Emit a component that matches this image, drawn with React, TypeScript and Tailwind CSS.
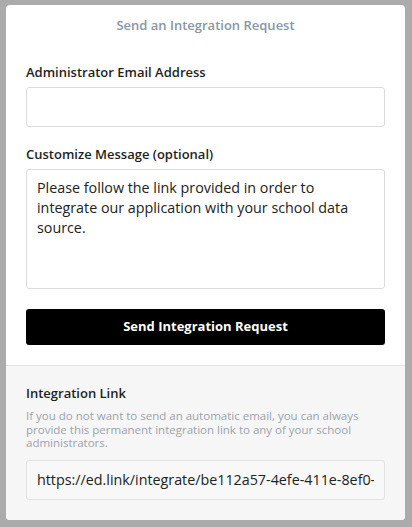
import React from 'react';

const font = { fontFamily: '"Open Sans", "Noto Sans", Arial, sans-serif' };

export default function App() {
  return (
    <div className="min-h-[527px] w-[412px] bg-[#ababab] pt-[5px] px-[6px] pb-[7px]" style={font}>
      <div className="w-[399px] h-[515px] bg-white rounded-[4px] overflow-hidden flex flex-col">
        {/* Request form */}
        <section className="px-5 pb-5">
          <h1 className="text-center text-[13px] leading-5 font-semibold text-[#8a96a3] pt-[10px] pb-[27px]">
            Send an Integration Request
          </h1>

          <label className="block text-[13px] font-semibold text-[#1f1f1f] leading-5 mb-[5px]">
            Administrator Email Address
          </label>
          <input
            type="text"
            className="block w-full h-10 border border-[#dcdcdc] rounded-[3px] px-[11px] outline-none"
          />

          <label className="block text-[13px] font-semibold text-[#1f1f1f] leading-5 mt-[17px] mb-[5px]">
            Customize Message (optional)
          </label>
          <textarea
            className="block w-full h-[120px] border border-[#dcdcdc] rounded-[3px] px-[10px] py-[8px] text-[14.3px] leading-5 text-[#222] outline-none resize-none"
            defaultValue="Please follow the link provided in order to integrate our application with your school data source."
          />

          <button className="mt-5 w-full h-9 bg-black text-white rounded-[3px] text-[13px] font-bold">
            Send Integration Request
          </button>
        </section>

        {/* Permanent link */}
        <section className="flex-1 bg-[#f6f6f6] border-t border-[#e4e4e4] px-5 pt-[17px]">
          <h2 className="text-[13px] font-semibold text-[#1f1f1f] leading-5">Integration Link</h2>
          <p className="mt-[6px] text-[11.5px] leading-[13.5px] text-[#9aa3ab]">
            If you do not want to send an automatic email, you can always provide this permanent integration link to any of your school administrators.
          </p>
          <input
            readOnly
            value="https://ed.link/integrate/be112a57-4efe-411e-8ef0-6c2a91d4f3b7"
            className="mt-[10px] block w-full h-10 bg-[#f8f8f8] border border-[#e2e2e2] rounded-[3px] px-[10px] text-[14.3px] text-[#222] outline-none"
          />
        </section>
      </div>
    </div>
  );
}
